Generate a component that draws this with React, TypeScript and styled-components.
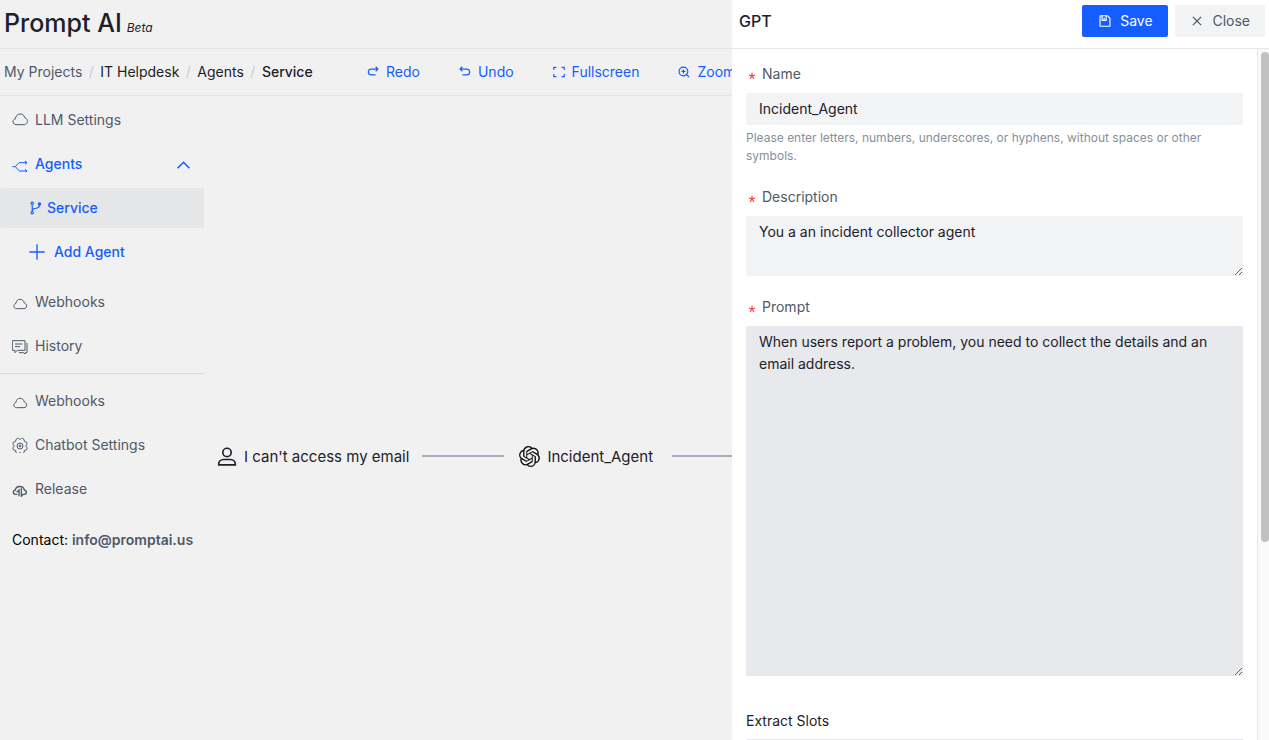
import React from "react";
import styled, { createGlobalStyle, css } from "styled-components";
import { SiOpenai } from "react-icons/si";

const GlobalStyle = createGlobalStyle`
  *, *::before, *::after { box-sizing: border-box; }
  body {
    margin: 0;
    background: #f1f1f1;
    color: #1d2129;
    font-family: Inter, "Liberation Sans", sans-serif;
    font-size: 14px;
    line-height: 22px;
  }
  button, input, textarea { font: inherit; color: inherit; }
  a { color: inherit; text-decoration: none; }
`;

/* ---------- icons ---------- */

const LineIcon = styled.svg<{ $size?: number; $weight?: number }>`
  flex: none;
  width: ${(p) => p.$size ?? 14}px;
  height: ${(p) => p.$size ?? 14}px;
  fill: none;
  stroke: currentColor;
  stroke-width: ${(p) => p.$weight ?? 4};
`;

const icons = {
  redo: "M33 22l8-8-8-8M40 14H18a10 10 0 1 0 0 20h15",
  undo: "M15 22l-8-8 8-8M8 14h22a10 10 0 1 1 0 20H15",
  fullscreen:
    "M42 17V9a1 1 0 0 0-1-1h-8M6 17V9a1 1 0 0 1 1-1h8m27 23v8a1 1 0 0 1-1 1h-8M6 31v8a1 1 0 0 0 1 1h8",
  zoomIn:
    "M32.607 32.607A14.953 14.953 0 0 0 37 22c0-8.284-6.716-15-15-15-8.284 0-15 6.716-15 15 0 8.284 6.716 15 15 15 4.142 0 7.892-1.679 10.607-4.393Zm0 0L41.5 41.5M29 22H15m7 7V15",
  save: "M21 13v9m18 20H9a2 2 0 0 1-2-2V8a2 2 0 0 1 2-2h22.55a2 2 0 0 1 1.414.586l7.45 7.45A2 2 0 0 1 41 15.45V40a2 2 0 0 1-2 2ZM14 6h14v15a1 1 0 0 1-1 1H15a1 1 0 0 1-1-1V6Z",
  close:
    "M9.857 9.858 24 24m0 0 14.142 14.142M24 24 38.142 9.858M24 24 9.857 38.142",
  branch:
    "M15 8a4 4 0 1 1-8 0 4 4 0 0 1 8 0ZM40 10a4 4 0 1 1-8 0 4 4 0 0 1 8 0ZM36 12v-4M15 40a4 4 0 1 1-8 0 4 4 0 0 1 8 0ZM11 12v24M36 14c0 6-4 10-11 11-7 .5-14 3-14 11",
  plus: "M24 1v46M1 24h46",
  chevronUp: "M5 36 24 17l19 19",
  cloudLarge:
    "M12 38c-11-1-12-16-2-17C12 2 35 1 38 17c12 4 10 20-1 21Z",
  cloud:
    "M13 44c-9 0-10-14-1-16C13 12 34 12 37 27c9 2 9 17-1 17Z",
  split:
    "M1 32h9M10 32l11-12h24M10 32l12 13h23M39 15l6 5-6 5M39 40l6 5-6 5",
  chat: "M1 8h38v29H16l-7 7v-7H1ZM9 18h22M9 26h15M45 15v29h-5v4l-6-4H21",
  gear:
    "M17 4h3l4 4 4-4h3l5 3 1 6 6 2 2 4v3l-4 5 4 5v3l-2 4-6 2-1 6-5 3h-3l-4-4-4 4h-3l-5-3-1-6-6-2-2-4v-3l4-5-4-5v-3l2-4 6-2 1-6ZM33 27a9 9 0 1 1-18 0 9 9 0 0 1 18 0ZM27 27a3 3 0 1 1-6 0 3 3 0 0 1 6 0Z",
  release:
    "M16 40h-4C2 40 1 29 10 27 12 13 34 13 37 27c9 2 8 13-1 13h-5M21 46V27l-7 7M28 22v24l6-7",
  user: "M34 13a10 10 0 1 1-20 0 10 10 0 0 1 20 0ZM4 42c0-7 5-12 12-12h16c7 0 12 5 12 12v1H4Z",
  star: "M24 24V4M24 24 5 18M24 24 12 41M24 24l12 17M24 24l19-6",
};

type IconName = keyof typeof icons;

function Icon({ name, size, weight }: { name: IconName; size?: number; weight?: number }) {
  return (
    <LineIcon viewBox="0 0 48 48" $size={size} $weight={weight} aria-hidden="true">
      <path d={icons[name]} />
    </LineIcon>
  );
}

/* ---------- page frame ---------- */

const Shell = styled.div`
  display: flex;
  height: 100vh;
`;

const Workspace = styled.div`
  display: flex;
  flex: 1;
  flex-direction: column;
  min-width: 0;
  overflow: hidden;
`;

const Bar = styled.header`
  display: flex;
  flex: none;
  align-items: center;
  height: 49px;
  padding-left: 4px;
  border-bottom: 1px solid #e5e5e6;
  white-space: nowrap;
`;

const Brand = styled.h1`
  margin: 0;
  font-size: 25px;
  font-weight: 500;
  line-height: 46px;
  align-self: flex-start;
`;

const Beta = styled.em`
  margin-left: 5px;
  font-size: 12px;
  font-weight: 400;
`;

const ToolBar = styled(Bar).attrs({ as: "div" })`
  height: 47px;
`;

const Crumbs = styled.nav`
  display: flex;
  width: 346px;
  flex: none;
`;

const Crumb = styled.a<{ $tone?: "muted" | "current" }>`
  color: ${(p) => (p.$tone === "muted" ? "#4e5969" : "#1d2129")};
  font-weight: ${(p) => (p.$tone === "current" ? 500 : 400)};

  &:not(:first-child)::before {
    content: "/";
    display: inline-block;
    width: 18px;
    color: #c9cdd4;
    font-weight: 400;
    text-align: center;
  }
`;

const Tool = styled.button`
  display: flex;
  flex: none;
  align-items: center;
  gap: 6px;
  padding: 0 22px 0 16px;
  border: 0;
  background: none;
  color: #165dff;
`;

const Columns = styled.div`
  display: flex;
  flex: 1;
  min-height: 0;
`;

/* ---------- side menu ---------- */

const SideMenu = styled.nav`
  flex: none;
  width: 204px;
  padding-top: 4px;
`;

const itemStates = {
  plain: css`
    color: #4e5969;
  `,
  active: css`
    color: #165dff;
    font-weight: 500;
  `,
  selected: css`
    color: #165dff;
    font-weight: 500;
    background: #e5e6e8;
  `,
};

const MenuItem = styled.a<{ $state?: keyof typeof itemStates; $nested?: boolean; $gap?: number }>`
  display: flex;
  align-items: center;
  gap: ${(p) => p.$gap ?? 7}px;
  height: 40px;
  margin-bottom: 4px;
  padding: 0 13px 0 ${(p) => (p.$nested ? 29 : 12)}px;
  border-radius: 2px;
  ${(p) => itemStates[p.$state ?? "plain"]}

  svg:nth-of-type(2) {
    margin-left: auto;
  }
`;

const SubMenu = styled.div`
  margin-bottom: 10px;
`;

const Divider = styled.hr`
  margin: 7px 0;
  border: 0;
  border-top: 1px solid #d9dadd;
`;

const Contact = styled.p`
  margin: 20px 0 0 12px;
  color: #000;

  a {
    color: #4e5969;
    font-weight: 600;
  }
`;

/* ---------- flow canvas ---------- */

const Canvas = styled.main`
  display: flex;
  flex: 1;
  align-items: flex-start;
  min-width: 0;
  padding: 348px 0 0 13px;
  overflow: hidden;
`;

const FlowNode = styled.div`
  display: flex;
  flex: none;
  align-items: center;
  gap: 7px;
  min-width: 140px;
  height: 25px;
  font-size: 15px;
`;

const FlowLink = styled.div`
  flex: none;
  width: 82px;
  height: 2px;
  margin: 11px 15px 0 13px;
  background: #a9adb9;
`;

/* ---------- drawer ---------- */

const Drawer = styled.aside`
  display: flex;
  flex: 0 0 537px;
  flex-direction: column;
  background: #fff;
`;

const DrawerHeader = styled.header`
  display: flex;
  flex: none;
  align-items: center;
  gap: 7px;
  height: 49px;
  padding: 0 4px 6px 7px;
  border-bottom: 1px solid #e5e6eb;
`;

const DrawerTitle = styled.h2`
  flex: 1;
  margin: 0;
  font-size: 16px;
  font-weight: 500;
`;

const Button = styled.button<{ $primary?: boolean }>`
  display: flex;
  align-items: center;
  justify-content: center;
  gap: 8px;
  min-width: 86px;
  height: 32px;
  padding: 0 15px;
  border: 0;
  border-radius: 2px;
  background: ${(p) => (p.$primary ? "#165dff" : "#f2f3f5")};
  color: ${(p) => (p.$primary ? "#fff" : "#4e5969")};
`;

const DrawerMain = styled.div`
  display: flex;
  flex: 1;
  min-height: 0;
`;

const Form = styled.form`
  flex: 1;
  padding: 14px 14px 0;
  overflow-y: auto;
  scrollbar-width: none;
`;

const Field = styled.div`
  display: flex;
  flex-direction: column;
  margin-bottom: 20px;
`;

const Label = styled.label`
  display: flex;
  align-items: center;
  gap: 6px;
  margin-bottom: 8px;
  padding-left: 2px;
  color: #4e5969;

  svg {
    margin-top: 4px;
    color: #f53f3f;
  }
`;

const control = css`
  display: block;
  width: 100%;
  border: 0;
  border-radius: 2px;
  outline: 0;
  background: #f2f3f5;
  color: #1d2129;
`;

const TextInput = styled.input`
  ${control}
  height: 32px;
  padding: 0 13px 2px;
`;

const TextArea = styled.textarea<{ $tall?: boolean }>`
  ${control}
  height: ${(p) => (p.$tall ? 350 : 60)}px;
  padding: 5px 13px;
  background: ${(p) => (p.$tall ? "#e8e9ed" : "#f2f3f5")};
  resize: vertical;
`;

const Hint = styled.p`
  margin: 4px 0 1px;
  color: #86909c;
  font-size: 12px;
  line-height: 18px;
`;

const SectionTitle = styled.h3`
  margin: 34px 0 0;
  padding-bottom: 7px;
  border-bottom: 1px solid #e5e6eb;
  font-size: 14px;
  font-weight: 400;
`;

const ScrollTrack = styled.div`
  flex: none;
  width: 12px;
  padding: 3px 0 0 3px;
  border-left: 1px solid #e8e8e8;
  background: #fafafa;
`;

const ScrollThumb = styled.div`
  height: 71.2%;
  border-radius: 4px;
  background: #c1c1c1;
`;

function RequiredLabel({ htmlFor, children }: { htmlFor: string; children: React.ReactNode }) {
  return (
    <Label htmlFor={htmlFor}>
      <Icon name="star" size={8} weight={7} />
      {children}
    </Label>
  );
}

export default function App() {
  return (
    <>
      <GlobalStyle />
      <Shell>
        <Workspace>
          <Bar>
            <Brand>
              Prompt AI<Beta>Beta</Beta>
            </Brand>
          </Bar>
          <ToolBar>
            <Crumbs aria-label="Breadcrumb">
              <Crumb href="#projects" $tone="muted">My Projects</Crumb>
              <Crumb href="#helpdesk">IT Helpdesk</Crumb>
              <Crumb href="#agents">Agents</Crumb>
              <Crumb href="#service" $tone="current">Service</Crumb>
            </Crumbs>
            <Tool type="button"><Icon name="redo" />Redo</Tool>
            <Tool type="button"><Icon name="undo" />Undo</Tool>
            <Tool type="button"><Icon name="fullscreen" />Fullscreen</Tool>
            <Tool type="button"><Icon name="zoomIn" />Zoom</Tool>
          </ToolBar>
          <Columns>
            <SideMenu aria-label="Project">
              <MenuItem href="#llm"><Icon name="cloudLarge" size={16} weight={3} />LLM Settings</MenuItem>
              <MenuItem href="#agents" $state="active">
                <Icon name="split" size={16} weight={3} />Agents<Icon name="chevronUp" size={15} weight={5} />
              </MenuItem>
              <SubMenu>
                <MenuItem href="#service" $state="selected" $nested $gap={4}>
                  <Icon name="branch" />Service
                </MenuItem>
                <MenuItem href="#add-agent" $state="active" $nested $gap={9}>
                  <Icon name="plus" size={16} />Add Agent
                </MenuItem>
              </SubMenu>
              <MenuItem href="#webhooks"><Icon name="cloud" size={16} weight={3} />Webhooks</MenuItem>
              <MenuItem href="#history"><Icon name="chat" size={16} weight={3} />History</MenuItem>
              <Divider />
              <MenuItem href="#project-webhooks"><Icon name="cloud" size={16} weight={3} />Webhooks</MenuItem>
              <MenuItem href="#chatbot"><Icon name="gear" size={16} weight={3} />Chatbot Settings</MenuItem>
              <MenuItem href="#release"><Icon name="release" size={16} />Release</MenuItem>
              <Contact>
                Contact: <a href="mailto:info@promptai.us">info@promptai.us</a>
              </Contact>
            </SideMenu>
            <Canvas>
              <FlowNode><Icon name="user" size={20} weight={4} />I can't access my email</FlowNode>
              <FlowLink />
              <FlowNode><SiOpenai size={21} color="#111" aria-hidden="true" />Incident_Agent</FlowNode>
              <FlowLink />
            </Canvas>
          </Columns>
        </Workspace>
        <Drawer>
          <DrawerHeader>
            <DrawerTitle>GPT</DrawerTitle>
            <Button type="button" $primary><Icon name="save" />Save</Button>
            <Button type="button"><Icon name="close" />Close</Button>
          </DrawerHeader>
          <DrawerMain>
            <Form>
              <Field>
                <RequiredLabel htmlFor="name">Name</RequiredLabel>
                <TextInput id="name" defaultValue="Incident_Agent" />
                <Hint>
                  Please enter letters, numbers, underscores, or hyphens, without spaces or other symbols.
                </Hint>
              </Field>
              <Field>
                <RequiredLabel htmlFor="description">Description</RequiredLabel>
                <TextArea id="description" defaultValue="You a an incident collector agent" />
              </Field>
              <Field>
                <RequiredLabel htmlFor="prompt">Prompt</RequiredLabel>
                <TextArea
                  id="prompt"
                  $tall
                  defaultValue="When users report a problem, you need to collect the details and an email address."
                />
              </Field>
              <SectionTitle>Extract Slots</SectionTitle>
            </Form>
            <ScrollTrack><ScrollThumb /></ScrollTrack>
          </DrawerMain>
        </Drawer>
      </Shell>
    </>
  );
}
